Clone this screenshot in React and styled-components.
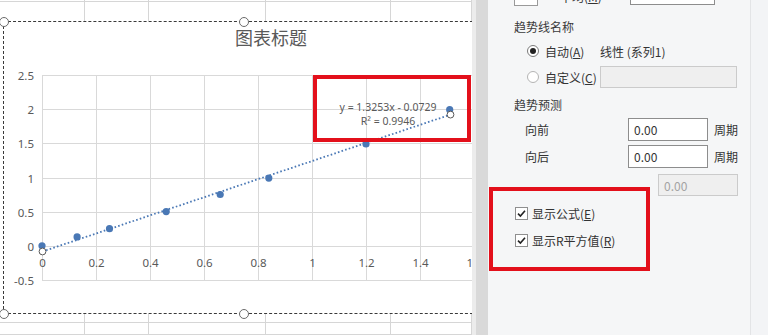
import React from 'react';
import styled, { createGlobalStyle } from 'styled-components';

const GlobalStyle = createGlobalStyle`
  html, body {
    margin: 0;
    padding: 0;
    background: #fff;
  }
  body {
    font-family: "Noto Sans CJK SC", "Noto Sans", sans-serif;
    overflow: hidden;
  }
`;

const Page = styled.div`
  display: flex;
  width: 768px;
  height: 335px;
  overflow: hidden;
`;

const Sheet = styled.div`
  position: relative;
  flex: 0 0 472px;
  height: 335px;
  overflow: hidden;
  background: #fff;
`;

const SheetGrid = styled.div`
  display: grid;
  grid-template-columns: 85px 64px 117px 125px 1fr;
  grid-template-rows: 2px 321px 1fr;
  height: 100%;
`;

const Cell = styled.div`
  border-right: 1px solid #d6d6d6;
  border-bottom: 1px solid #d6d6d6;
`;

const ChartFrame = styled.div`
  position: absolute;
  left: 3px;
  top: 21px;
  width: 480px;
  height: 293px;
  box-sizing: border-box;
  border: 1px dashed #3a3a3a;
  background: #fff;
`;

const ChartTitle = styled.div`
  padding: 2px 0 0 56px;
  text-align: center;
  font-size: 18px;
  line-height: 26px;
  color: #595959;
`;

const PlotSvg = styled.svg`
  position: absolute;
  left: 0;
  top: 0;
  font-family: "Noto Sans", "Open Sans", sans-serif;
`;

const Handle = styled.div`
  position: absolute;
  left: ${p => p.$x - 5}px;
  top: ${p => p.$y - 5}px;
  width: 10px;
  height: 10px;
  box-sizing: border-box;
  border: 1px solid #6b6b6b;
  border-radius: 50%;
  background: #fff;
`;

const Callout = styled.div`
  position: absolute;
  left: ${p => p.$x}px;
  top: ${p => p.$y}px;
  width: ${p => p.$w}px;
  height: ${p => p.$h}px;
  box-sizing: border-box;
  border: 4px solid #e3101b;
  pointer-events: none;
`;

const Scrollbar = styled.div`
  flex: 0 0 16px;
  box-sizing: border-box;
  border-left: 4px solid #ececec;
  background: #d9d9d9;
`;

const Panel = styled.div`
  display: flex;
  flex: 1;
  background: #f3f4f6;
`;

const PanelBody = styled.div`
  position: relative;
  flex: 0 0 263px;
  display: flex;
  flex-direction: column;
  box-sizing: border-box;
  padding-left: 26px;
  background: #f5f6f7;
  border-right: 1px solid #e3e4e6;
  color: #333;
  font-size: 12px;
  overflow: hidden;
`;

const Row = styled.div`
  display: flex;
  align-items: center;
  flex-shrink: 0;
  height: ${p => p.$h}px;
  margin-top: ${p => p.$mt}px;
  padding-left: ${p => p.$indent || 0}px;
  white-space: nowrap;
`;

const Heading = styled.span`
  color: #3a3a3a;
`;

const SpinBox = styled.div`
  width: 24px;
  height: 20px;
  box-sizing: border-box;
  border: 1px solid #9a9a9a;
  background: #fff;
`;

const CutLabel = styled.span`
  margin-left: 22px;
  width: 70px;
`;

const Option = styled.label`
  display: flex;
  align-items: center;
  gap: 6px;
  width: ${p => p.$w || 73}px;
`;

const Radio = styled.span`
  position: relative;
  width: 12px;
  height: 12px;
  box-sizing: border-box;
  border: 1px solid ${p => (p.$on ? '#7a7a7a' : '#b4b4b4')};
  border-radius: 50%;
  background: #fff;

  &::after {
    content: '';
    display: ${p => (p.$on ? 'block' : 'none')};
    position: absolute;
    left: 2px;
    top: 2px;
    width: 6px;
    height: 6px;
    border-radius: 50%;
    background: #222;
  }
`;

const Field = styled.div`
  display: flex;
  align-items: center;
  width: ${p => p.$w}px;
  height: ${p => p.$h || 23}px;
  box-sizing: border-box;
  padding-left: 5px;
  border: 1px solid ${p => (p.$disabled ? '#cbcbcb' : '#8d8d8d')};
  background: ${p => (p.$disabled ? '#efefef' : '#fff')};
  color: ${p => (p.$disabled ? '#a3a3a3' : '#333')};
  font-size: 12px;
`;

const FieldLabel = styled.span`
  width: 103px;
`;

const Unit = styled.span`
  margin-left: 6px;
`;

const Check = styled.span`
  display: flex;
  align-items: center;
  justify-content: center;
  width: 13px;
  height: 13px;
  box-sizing: border-box;
  border: 1px solid #8f8f8f;
  background: #fff;
`;

const CheckText = styled.span`
  margin-left: 4px;
`;

const yPix = v => Math.floor(246.5 - v * 68.4) + 0.5;
const xPix = u => Math.round(42 + u * 270) + 0.5;

const yTicks = [2.5, 2, 1.5, 1, 0.5, 0, -0.5];
const xTicks = [0, 0.2, 0.4, 0.6, 0.8, 1, 1.2, 1.4, 1.6];
const points = [
  [0, 0.01], [0.13, 0.14], [0.25, 0.26], [0.46, 0.51],
  [0.66, 0.76], [0.84, 1.0], [1.2, 1.5], [1.51, 2.0],
];

const slope = 1.3253;
const intercept = -0.0729;
const lineStart = [xPix(0), 246.5 - intercept * 68.4];
const lineEnd = [xPix(1.51), 246.5 - (slope * 1.51 + intercept) * 68.4];

function Plot() {
  return (
    <PlotSvg width="478" height="291" viewBox="4 22 478 291">
      <g stroke="#d9d9d9" strokeWidth="1" shapeRendering="crispEdges">
        {yTicks.map(v => (
          <line key={'h' + v} x1="42" x2="480" y1={yPix(v)} y2={yPix(v)} />
        ))}
        {xTicks.map(u => (
          <line key={'v' + u} x1={xPix(u)} x2={xPix(u)} y1={yPix(2.5)} y2={yPix(-0.5)} />
        ))}
      </g>
      <g fill="#595959" fontSize="11.5">
        {yTicks.map(v => (
          <text key={'yl' + v} x="34" y={yPix(v)} textAnchor="end" dominantBaseline="central">
            {v}
          </text>
        ))}
        {xTicks.map(u => (
          <text key={'xl' + u} x={xPix(u)} y="262" textAnchor="middle" dominantBaseline="central">
            {u}
          </text>
        ))}
      </g>
      {points.map(([u, v]) => (
        <circle key={'p' + u} cx={42 + u * 270} cy={246.5 - v * 68.4} r="3.6" fill="#4a78b5" />
      ))}
      <line
        x1={lineStart[0]}
        y1={lineStart[1]}
        x2={lineEnd[0]}
        y2={lineEnd[1]}
        stroke="#4a78b5"
        strokeWidth="1.8"
        strokeDasharray="1.6 2.2"
      />
      <circle cx={lineStart[0]} cy={lineStart[1]} r="3.4" fill="#fff" stroke="#5a5a5a" />
      <circle cx={lineEnd[0]} cy={lineEnd[1]} r="3.4" fill="#fff" stroke="#5a5a5a" />
      <g fill="#595959" fontSize="10.5" textAnchor="middle">
        <text x="388" y="106.5" dominantBaseline="central">y = 1.3253x - 0.0729</text>
        <text x="388" y="120.5" dominantBaseline="central">R² = 0.9946</text>
      </g>
    </PlotSvg>
  );
}

function CheckMark() {
  return (
    <svg width="11" height="11" viewBox="0 0 11 11">
      <path d="M2 5.6 L4.4 8 L9 2.8" fill="none" stroke="#222" strokeWidth="1.6" />
    </svg>
  );
}

export default function App() {
  return (
    <Page>
      <GlobalStyle />
      <Sheet>
        <SheetGrid>
          {Array.from({ length: 15 }, (_, i) => <Cell key={i} />)}
        </SheetGrid>
        <ChartFrame>
          <ChartTitle>图表标题</ChartTitle>
          <Plot />
        </ChartFrame>
        <Handle $x={3.5} $y={21.5} />
        <Handle $x={243.5} $y={21.5} />
        <Handle $x={3.5} $y={313.5} />
        <Handle $x={243.5} $y={313.5} />
        <Callout $x={313} $y={75} $w={158} $h={67} />
      </Sheet>
      <Scrollbar />
      <Panel>
        <PanelBody>
          <Row $h={22} $mt={-15}>
            <SpinBox />
            <CutLabel>
              平均(<u>M</u>)
            </CutLabel>
            <Field $w={85} $h={18} />
          </Row>
          <Row $h={24} $mt={7}>
            <Heading>趋势线名称</Heading>
          </Row>
          <Row $h={24} $mt={1} $indent={13}>
            <Option>
              <Radio $on />
              <span>
                自动(<u>A</u>)
              </span>
            </Option>
            <span>线性 (系列1)</span>
          </Row>
          <Row $h={22} $mt={3} $indent={13}>
            <Option>
              <Radio />
              <span>
                自定义(<u>C</u>)
              </span>
            </Option>
            <Field $w={137} $h={22} $disabled />
          </Row>
          <Row $h={24} $mt={4}>
            <Heading>趋势预测</Heading>
          </Row>
          <Row $h={23} $mt={2} $indent={11}>
            <FieldLabel>向前</FieldLabel>
            <Field $w={80}>0.00</Field>
            <Unit>周期</Unit>
          </Row>
          <Row $h={23} $mt={4} $indent={11}>
            <FieldLabel>向后</FieldLabel>
            <Field $w={80}>0.00</Field>
            <Unit>周期</Unit>
          </Row>
          <Row $h={22} $mt={6} $indent={144}>
            <Field $w={80} $h={22} $disabled>0.00</Field>
          </Row>
          <Row $h={22} $mt={6} $indent={1}>
            <Check>
              <CheckMark />
            </Check>
            <CheckText>
              显示公式(<u>E</u>)
            </CheckText>
          </Row>
          <Row $h={22} $mt={5} $indent={1}>
            <Check>
              <CheckMark />
            </Check>
            <CheckText>
              显示R平方值(<u>R</u>)
            </CheckText>
          </Row>
          <Callout $x={1} $y={187} $w={161} $h={84} />
        </PanelBody>
      </Panel>
    </Page>
  );
}
